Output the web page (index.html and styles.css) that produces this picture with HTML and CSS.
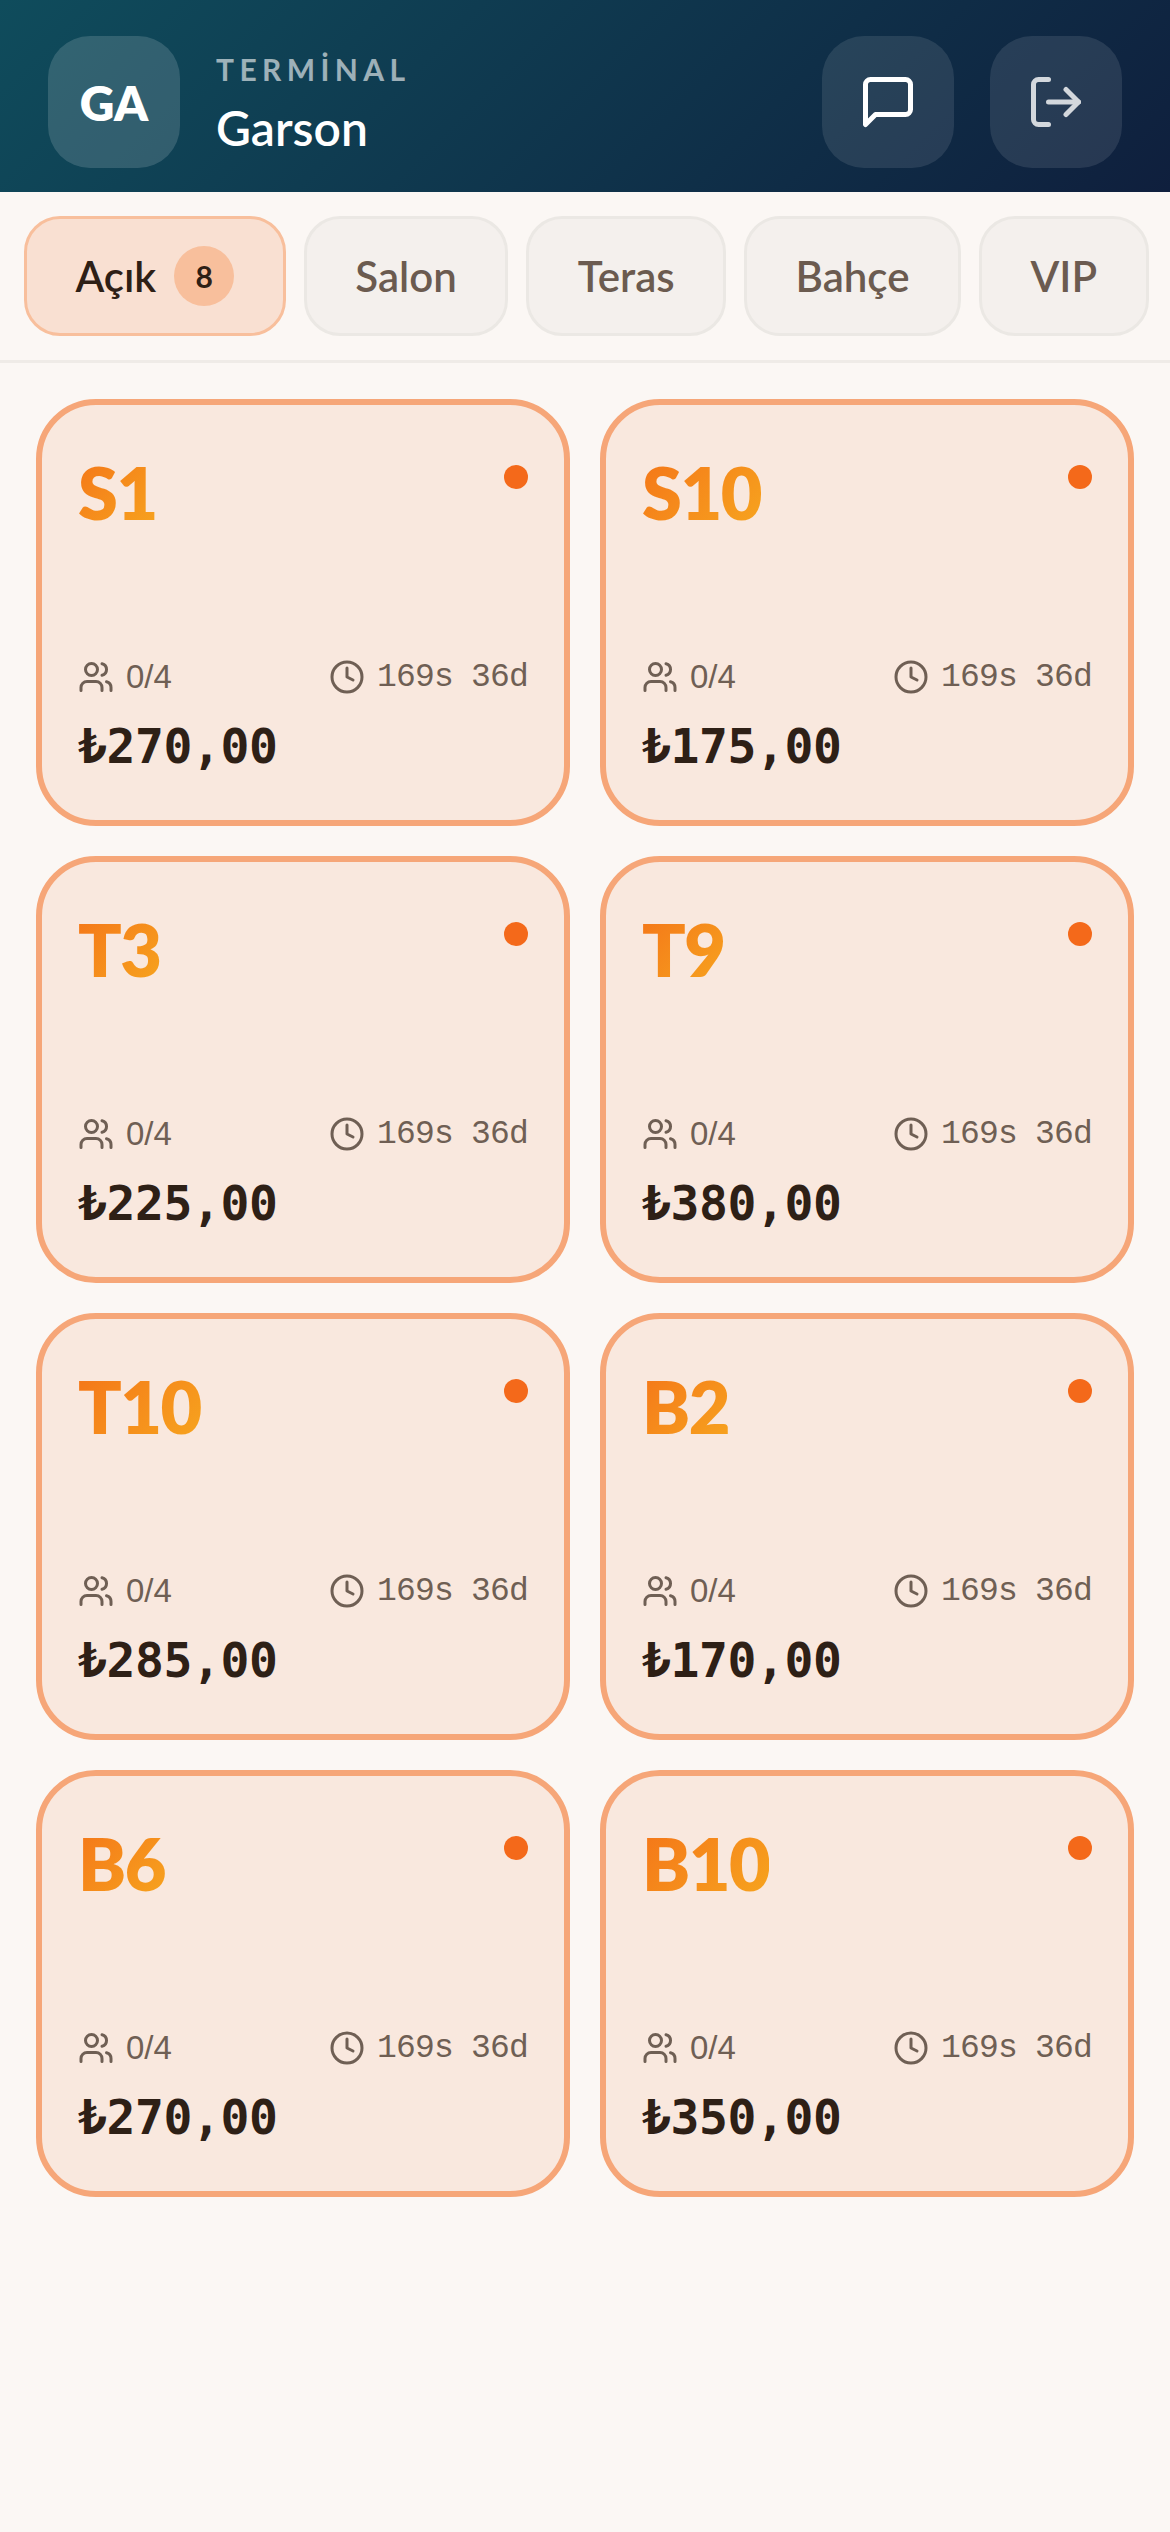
FILE: index.html
```html
<!DOCTYPE html>
<html lang="tr">
<head>
    <meta charset="UTF-8">
    <title>Terminal - Garson</title>
    <link rel="stylesheet" href="styles.css">
</head>
<body>
    <header class="topbar">
        <div class="user">
            <div class="avatar">GA</div>
            <div>
                <div class="user-label">TERMİNAL</div>
                <div class="user-name">Garson</div>
            </div>
        </div>
        <div class="actions">
            <button class="icon-btn">
                <svg viewBox="0 0 24 24"><path d="M21 15a2 2 0 0 1-2 2H7l-4 4V5a2 2 0 0 1 2-2h14a2 2 0 0 1 2 2z"/></svg>
            </button>
            <button class="icon-btn dim">
                <svg viewBox="0 0 24 24"><path d="M9 21H5a2 2 0 0 1-2-2V5a2 2 0 0 1 2-2h4"/><path d="M16 17l5-5-5-5"/><path d="M21 12H9"/></svg>
            </button>
        </div>
    </header>

    <nav class="tabs">
        <div class="tab active">Açık <span class="count">8</span></div>
        <div class="tab">Salon</div>
        <div class="tab">Teras</div>
        <div class="tab">Bahçe</div>
        <div class="tab">VIP</div>
    </nav>

    <main class="tables">
        <div class="table-card">
            <div class="card-top"><span class="table-name">S1</span><span class="dot"></span></div>
            <div class="card-meta">
                <span class="meta-item"><svg viewBox="0 0 24 24"><path d="M16 21v-2a4 4 0 0 0-4-4H6a4 4 0 0 0-4 4v2"/><circle cx="9" cy="7" r="4"/><path d="M22 21v-2a4 4 0 0 0-3-3.87"/><path d="M16 3.13a4 4 0 0 1 0 7.75"/></svg>0/4</span>
                <span class="meta-item"><svg viewBox="0 0 24 24"><circle cx="12" cy="12" r="10"/><path d="M12 6v6l4 2"/></svg><span class="meta-time">169s</span><span class="meta-time meta-extra">36d</span></span>
            </div>
            <div class="price">₺270,00</div>
        </div>
        <div class="table-card">
            <div class="card-top"><span class="table-name">S10</span><span class="dot"></span></div>
            <div class="card-meta">
                <span class="meta-item"><svg viewBox="0 0 24 24"><path d="M16 21v-2a4 4 0 0 0-4-4H6a4 4 0 0 0-4 4v2"/><circle cx="9" cy="7" r="4"/><path d="M22 21v-2a4 4 0 0 0-3-3.87"/><path d="M16 3.13a4 4 0 0 1 0 7.75"/></svg>0/4</span>
                <span class="meta-item"><svg viewBox="0 0 24 24"><circle cx="12" cy="12" r="10"/><path d="M12 6v6l4 2"/></svg><span class="meta-time">169s</span><span class="meta-time meta-extra">36d</span></span>
            </div>
            <div class="price">₺175,00</div>
        </div>
        <div class="table-card">
            <div class="card-top"><span class="table-name">T3</span><span class="dot"></span></div>
            <div class="card-meta">
                <span class="meta-item"><svg viewBox="0 0 24 24"><path d="M16 21v-2a4 4 0 0 0-4-4H6a4 4 0 0 0-4 4v2"/><circle cx="9" cy="7" r="4"/><path d="M22 21v-2a4 4 0 0 0-3-3.87"/><path d="M16 3.13a4 4 0 0 1 0 7.75"/></svg>0/4</span>
                <span class="meta-item"><svg viewBox="0 0 24 24"><circle cx="12" cy="12" r="10"/><path d="M12 6v6l4 2"/></svg><span class="meta-time">169s</span><span class="meta-time meta-extra">36d</span></span>
            </div>
            <div class="price">₺225,00</div>
        </div>
        <div class="table-card">
            <div class="card-top"><span class="table-name">T9</span><span class="dot"></span></div>
            <div class="card-meta">
                <span class="meta-item"><svg viewBox="0 0 24 24"><path d="M16 21v-2a4 4 0 0 0-4-4H6a4 4 0 0 0-4 4v2"/><circle cx="9" cy="7" r="4"/><path d="M22 21v-2a4 4 0 0 0-3-3.87"/><path d="M16 3.13a4 4 0 0 1 0 7.75"/></svg>0/4</span>
                <span class="meta-item"><svg viewBox="0 0 24 24"><circle cx="12" cy="12" r="10"/><path d="M12 6v6l4 2"/></svg><span class="meta-time">169s</span><span class="meta-time meta-extra">36d</span></span>
            </div>
            <div class="price">₺380,00</div>
        </div>
        <div class="table-card">
            <div class="card-top"><span class="table-name">T10</span><span class="dot"></span></div>
            <div class="card-meta">
                <span class="meta-item"><svg viewBox="0 0 24 24"><path d="M16 21v-2a4 4 0 0 0-4-4H6a4 4 0 0 0-4 4v2"/><circle cx="9" cy="7" r="4"/><path d="M22 21v-2a4 4 0 0 0-3-3.87"/><path d="M16 3.13a4 4 0 0 1 0 7.75"/></svg>0/4</span>
                <span class="meta-item"><svg viewBox="0 0 24 24"><circle cx="12" cy="12" r="10"/><path d="M12 6v6l4 2"/></svg><span class="meta-time">169s</span><span class="meta-time meta-extra">36d</span></span>
            </div>
            <div class="price">₺285,00</div>
        </div>
        <div class="table-card">
            <div class="card-top"><span class="table-name">B2</span><span class="dot"></span></div>
            <div class="card-meta">
                <span class="meta-item"><svg viewBox="0 0 24 24"><path d="M16 21v-2a4 4 0 0 0-4-4H6a4 4 0 0 0-4 4v2"/><circle cx="9" cy="7" r="4"/><path d="M22 21v-2a4 4 0 0 0-3-3.87"/><path d="M16 3.13a4 4 0 0 1 0 7.75"/></svg>0/4</span>
                <span class="meta-item"><svg viewBox="0 0 24 24"><circle cx="12" cy="12" r="10"/><path d="M12 6v6l4 2"/></svg><span class="meta-time">169s</span><span class="meta-time meta-extra">36d</span></span>
            </div>
            <div class="price">₺170,00</div>
        </div>
        <div class="table-card">
            <div class="card-top"><span class="table-name">B6</span><span class="dot"></span></div>
            <div class="card-meta">
                <span class="meta-item"><svg viewBox="0 0 24 24"><path d="M16 21v-2a4 4 0 0 0-4-4H6a4 4 0 0 0-4 4v2"/><circle cx="9" cy="7" r="4"/><path d="M22 21v-2a4 4 0 0 0-3-3.87"/><path d="M16 3.13a4 4 0 0 1 0 7.75"/></svg>0/4</span>
                <span class="meta-item"><svg viewBox="0 0 24 24"><circle cx="12" cy="12" r="10"/><path d="M12 6v6l4 2"/></svg><span class="meta-time">169s</span><span class="meta-time meta-extra">36d</span></span>
            </div>
            <div class="price">₺270,00</div>
        </div>
        <div class="table-card">
            <div class="card-top"><span class="table-name">B10</span><span class="dot"></span></div>
            <div class="card-meta">
                <span class="meta-item"><svg viewBox="0 0 24 24"><path d="M16 21v-2a4 4 0 0 0-4-4H6a4 4 0 0 0-4 4v2"/><circle cx="9" cy="7" r="4"/><path d="M22 21v-2a4 4 0 0 0-3-3.87"/><path d="M16 3.13a4 4 0 0 1 0 7.75"/></svg>0/4</span>
                <span class="meta-item"><svg viewBox="0 0 24 24"><circle cx="12" cy="12" r="10"/><path d="M12 6v6l4 2"/></svg><span class="meta-time">169s</span><span class="meta-time meta-extra">36d</span></span>
            </div>
            <div class="price">₺350,00</div>
        </div>
    </main>
</body>
</html>
```
FILE: styles.css
```css
* {
    box-sizing: border-box;
}
body {
    margin: 0;
    min-height: 2532px;
    background-color: #fbf7f4;
    font-family: Lato, "Noto Sans", sans-serif;
    color: #2e2016;
}
.topbar {
    height: 192px;
    padding: 36px 48px 24px;
    display: flex;
    align-items: flex-start;
    justify-content: space-between;
    background: linear-gradient(135deg, #0f4c5c, #0f1f3d);
}
.user {
    display: flex;
    align-items: center;
    gap: 36px;
}
.avatar {
    width: 132px;
    height: 132px;
    border-radius: 42px;
    display: flex;
    align-items: center;
    justify-content: center;
    background-color: rgba(255,255,255,0.15);
    color: white;
    font-size: 48px;
    font-weight: 800;
}
.user-label {
    margin-top: 4px;
    margin-bottom: 5px;
    color: rgba(255,255,255,0.6);
    font-size: 30px;
    font-weight: 700;
    letter-spacing: 0.18em;
    line-height: 42px;
}
.user-name {
    color: white;
    font-size: 48px;
    font-weight: 600;
    line-height: 66px;
}
.actions {
    display: flex;
    gap: 36px;
}
.icon-btn {
    width: 132px;
    height: 132px;
    padding: 0;
    border: none;
    border-radius: 42px;
    display: flex;
    align-items: center;
    justify-content: center;
    background-color: rgba(255,255,255,0.1);
    color: white;
}
.icon-btn svg {
    width: 60px;
    height: 60px;
    fill: none;
    stroke: currentColor;
    stroke-width: 2;
    stroke-linecap: round;
    stroke-linejoin: round;
}
.icon-btn.dim svg {
    opacity: 0.8;
}
.tabs {
    display: flex;
    gap: 18px;
    padding: 24px;
    border-bottom: 3px solid #efebe7;
}
.tab {
    height: 120px;
    padding: 0 48.5px;
    display: flex;
    align-items: center;
    gap: 18px;
    border: 3px solid #ebe8e4;
    border-radius: 36px;
    background-color: #f4f0ed;
    color: #6b5b50;
    font-size: 42px;
    font-weight: 600;
}
.tab.active {
    background-color: #f9e0d2;
    border-color: #f8bf9c;
    color: #2e2016;
}
.count {
    width: 60px;
    height: 60px;
    border-radius: 50%;
    display: flex;
    align-items: center;
    justify-content: center;
    background-color: #f8bf9c;
    font-size: 30px;
    font-weight: 700;
}
.tables {
    display: grid;
    grid-template-columns: 1fr 1fr;
    gap: 30px;
    padding: 36px;
}
.table-card {
    height: 427px;
    padding: 36px;
    display: flex;
    flex-direction: column;
    border: 6px solid #f6a678;
    border-radius: 60px;
    background-color: #f9e8de;
}
.card-top {
    display: flex;
    justify-content: space-between;
    align-items: flex-start;
    flex: 1;
}
.table-name {
    background: linear-gradient(135deg, #f47218, #f7a81f);
    -webkit-background-clip: text;
    background-clip: text;
    color: transparent;
    font-size: 72px;
    font-weight: 800;
    letter-spacing: -1.5px;
    line-height: 102px;
}
.dot {
    width: 24px;
    height: 24px;
    margin-top: 24px;
    border-radius: 50%;
    background-color: #f4691a;
}
.card-meta {
    display: flex;
    justify-content: space-between;
    align-items: center;
    color: #6f5f54;
    font-family: "Liberation Sans", sans-serif;
    font-size: 33px;
}
.meta-item {
    display: flex;
    align-items: center;
    gap: 12px;
}
.meta-item svg {
    width: 36px;
    height: 36px;
    fill: none;
    stroke: currentColor;
    stroke-width: 2;
    stroke-linecap: round;
    stroke-linejoin: round;
}
.meta-time {
    font-family: "Liberation Mono", monospace;
    letter-spacing: -0.8px;
}
.meta-extra {
    margin-left: 6px;
}
.price {
    margin-top: 17px;
    margin-bottom: 5px;
    font-family: "DejaVu Sans Mono", monospace;
    font-size: 48px;
    font-weight: 700;
    letter-spacing: -0.4px;
    line-height: 66px;
}
```
